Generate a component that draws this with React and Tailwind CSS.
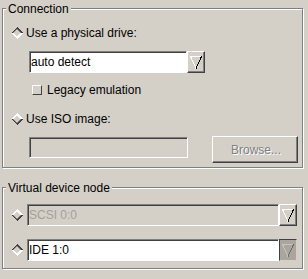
import React from 'react';

// Classic grey dialog: two etched group boxes with radio rows and combo boxes.

const etched = 'border border-[#808080] shadow-[inset_1px_1px_0_#ffffff,1px_1px_0_#ffffff]';
const sunken = 'border border-t-[#808080] border-l-[#808080] border-b-white border-r-white shadow-[inset_1px_1px_0_#404040]';
const raised = 'border border-t-white border-l-white border-b-[#404040] border-r-[#404040] shadow-[inset_-1px_-1px_0_#808080]';

function Diamond({ selected }) {
  const top = selected ? '#404040' : '#ffffff';
  const bottom = selected ? '#ffffff' : '#404040';
  const innerTop = selected ? '#808080' : '#ffffff';
  const innerBottom = selected ? '#ffffff' : '#808080';
  return (
    <svg width="12" height="12" viewBox="0 0 12 12" shapeRendering="crispEdges" className="shrink-0">
      <polygon points="0,6 6,0 12,6" fill={top} />
      <polygon points="0,6 6,12 12,6" fill={bottom} />
      <polygon points="1.4,6 6,1.4 10.6,6" fill={innerTop} />
      <polygon points="1.4,6 6,10.6 10.6,6" fill={innerBottom} />
      <polygon points="2.8,6 6,2.8 9.2,6 6,9.2" fill="#d4d0c8" />
    </svg>
  );
}

function Arrow({ dim }) {
  return (
    <svg width="12" height="13" viewBox="0 0 12 13" shapeRendering="crispEdges">
      <path d="M0.5 0.5 L11 0.5" stroke={dim ? '#c8c4bc' : '#ffffff'} fill="none" />
      <path d="M0.5 0.5 L6 12.5" stroke={dim ? '#c8c4bc' : '#ffffff'} fill="none" />
      <path d="M11.5 0.5 L6 12.5" stroke={dim ? '#6f6c66' : '#000000'} fill="none" />
    </svg>
  );
}

function Combo({ value, width, disabled, pressed }) {
  return (
    <div className="flex h-[22px]">
      <div
        className={`${sunken} h-full flex items-center pl-[1px] ${disabled ? 'bg-[#d4d0c8] text-[#a3a09a]' : 'bg-white text-black'}`}
        style={{ width }}
      >
        {value}
      </div>
      <div
        className={`w-[18px] h-full flex items-center justify-center ${
          pressed
            ? 'bg-[#aaa69f] border border-t-[#404040] border-l-[#404040] border-b-[#d4d0c8] border-r-[#d4d0c8]'
            : raised
        }`}
      >
        <Arrow dim={pressed} />
      </div>
    </div>
  );
}

function Group({ title, className, children }) {
  return (
    <div className={`${etched} w-[301px] ${className}`}>
      <div className="ml-[3px] -mt-[7px] w-fit px-[2px] bg-[#d4d0c8] leading-[14px]">{title}</div>
      {children}
    </div>
  );
}

export default function App() {
  return (
    <div
      className="w-[308px] h-[279px] bg-[#d4d0c8] pt-[8px] pl-[2px] text-[12px] leading-[14px] text-black overflow-hidden"
      style={{ fontFamily: '"Liberation Sans", Arial, sans-serif' }}
    >
      <Group title="Connection" className="h-[160px]">
        <div className="mt-[10px] pl-[8px] flex items-center gap-[3px] h-[14px]">
          <Diamond selected />
          <span>Use a physical drive:</span>
        </div>
        <div className="mt-[11px] ml-[26px]">
          <Combo value="auto detect" width={158} />
        </div>
        <div className="mt-[10px] ml-[29px] flex items-center gap-[5px] h-[14px]">
          <div className="w-[10px] h-[10px] bg-[#d4d0c8] border border-t-white border-l-white border-b-[#404040] border-r-[#404040]" />
          <span>Legacy emulation</span>
        </div>
        <div className="mt-[15px] pl-[8px] flex items-center gap-[3px] h-[14px]">
          <Diamond />
          <span>Use ISO image:</span>
        </div>
        <div className="mt-[10px] ml-[26px] flex items-start">
          <div className={`${sunken} mt-[1px] w-[159px] h-[21px] bg-[#d4d0c8]`} />
          <button
            type="button"
            className={`${raised} ml-[24px] w-[86px] h-[27px] bg-[#d4d0c8] text-[#808080] [text-shadow:1px_1px_0_#ffffff] flex items-center justify-center pl-[2px]`}
          >
            Browse...
          </button>
        </div>
      </Group>

      <Group title="Virtual device node" className="mt-[19px] h-[82px]">
        <div className="mt-[9px] pl-[8px] flex items-center gap-[4px]">
          <Diamond />
          <Combo value="SCSI 0:0" width={252} disabled />
        </div>
        <div className="mt-[13px] pl-[8px] flex items-center gap-[4px]">
          <Diamond selected />
          <Combo value="IDE 1:0" width={252} pressed />
        </div>
      </Group>
    </div>
  );
}
